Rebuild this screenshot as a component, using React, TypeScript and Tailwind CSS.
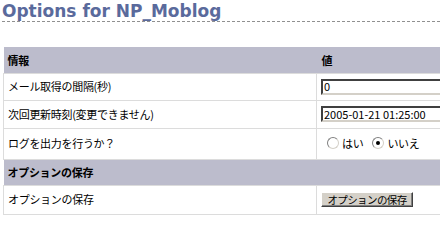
import React from "react";

const jp = { fontFamily: '"Noto Sans CJK JP", "DejaVu Sans", sans-serif' };

function Radio({ checked }: { checked?: boolean }) {
  return (
    <span className="relative inline-block w-[12px] h-[12px] rounded-full border border-[#808080] border-r-[#d4d0c8] border-b-[#d4d0c8] bg-white align-middle">
      {checked && <span className="absolute left-[3px] top-[3px] w-[4px] h-[4px] rounded-full bg-black" />}
    </span>
  );
}

const inputCls =
  "w-[200px] h-[16px] px-[1px] text-[11px] tracking-normal border-2 border-t-[#404040] border-l-[#404040] border-r-[#d4d0c8] border-b-[#d4d0c8] bg-white";

export default function App() {
  return (
    <div className="w-[440px] h-[223px] overflow-hidden bg-white text-black" style={jp}>
      <h2
        className="ml-[2px] pt-[2px] h-[22px] border-b border-dashed border-[#909090] text-[17px] leading-[18px] font-bold text-[#5a6a9c] whitespace-nowrap"
        style={{ fontFamily: '"DejaVu Sans", Verdana, sans-serif' }}
      >
        Options for NP_Moblog
      </h2>

      <table className="mt-[25px] ml-[3px] w-[640px] border-collapse text-[11px] tracking-[-0.3px]">
        <tbody>
          <tr className="h-[26px] bg-[#bcbccc]">
            <th className="w-[313px] px-[4px] text-left font-bold">情報</th>
            <th className="px-[4px] text-left font-bold">
              <span className="ml-[1px]">値</span>
            </th>
          </tr>
          <tr className="h-[27px]">
            <td className="px-[4px] border border-[#dcdcdc]">メール取得の間隔(秒)</td>
            <td className="px-[4px] border border-[#dcdcdc]">
              <input readOnly value="0" className={inputCls} style={jp} />
            </td>
          </tr>
          <tr className="h-[28px]">
            <td className="px-[4px] border border-[#dcdcdc]">次回更新時刻(変更できません)</td>
            <td className="px-[4px] border border-[#dcdcdc]">
              <input readOnly value="2005-01-21 01:25:00" className={inputCls} style={jp} />
            </td>
          </tr>
          <tr className="h-[31px]">
            <td className="px-[4px] border border-[#dcdcdc]">ログを出力を行うか？</td>
            <td className="px-[4px] border border-[#dcdcdc]">
              <span className="inline-flex items-center gap-[3px] ml-[6px]">
                <Radio />
                <span>はい</span>
              </span>
              <span className="inline-flex items-center gap-[3px] ml-[9px]">
                <Radio checked />
                <span>いいえ</span>
              </span>
            </td>
          </tr>
          <tr className="h-[26px] bg-[#bcbccc]">
            <th colSpan={2} className="px-[4px] text-left font-bold">オプションの保存</th>
          </tr>
          <tr className="h-[29px]">
            <td className="px-[4px] border border-[#dcdcdc]">オプションの保存</td>
            <td className="px-[4px] border border-[#dcdcdc]">
              <button
                className="w-[92px] h-[15px] px-0 bg-[#d4d0c8] text-[10.5px] leading-[11px] tracking-[-0.6px] border border-t-white border-l-white border-r-[#404040] border-b-[#404040] shadow-[inset_-1px_-1px_0_#808080]"
                style={jp}
              >
                オプションの保存
              </button>
            </td>
          </tr>
        </tbody>
      </table>
    </div>
  );
}
